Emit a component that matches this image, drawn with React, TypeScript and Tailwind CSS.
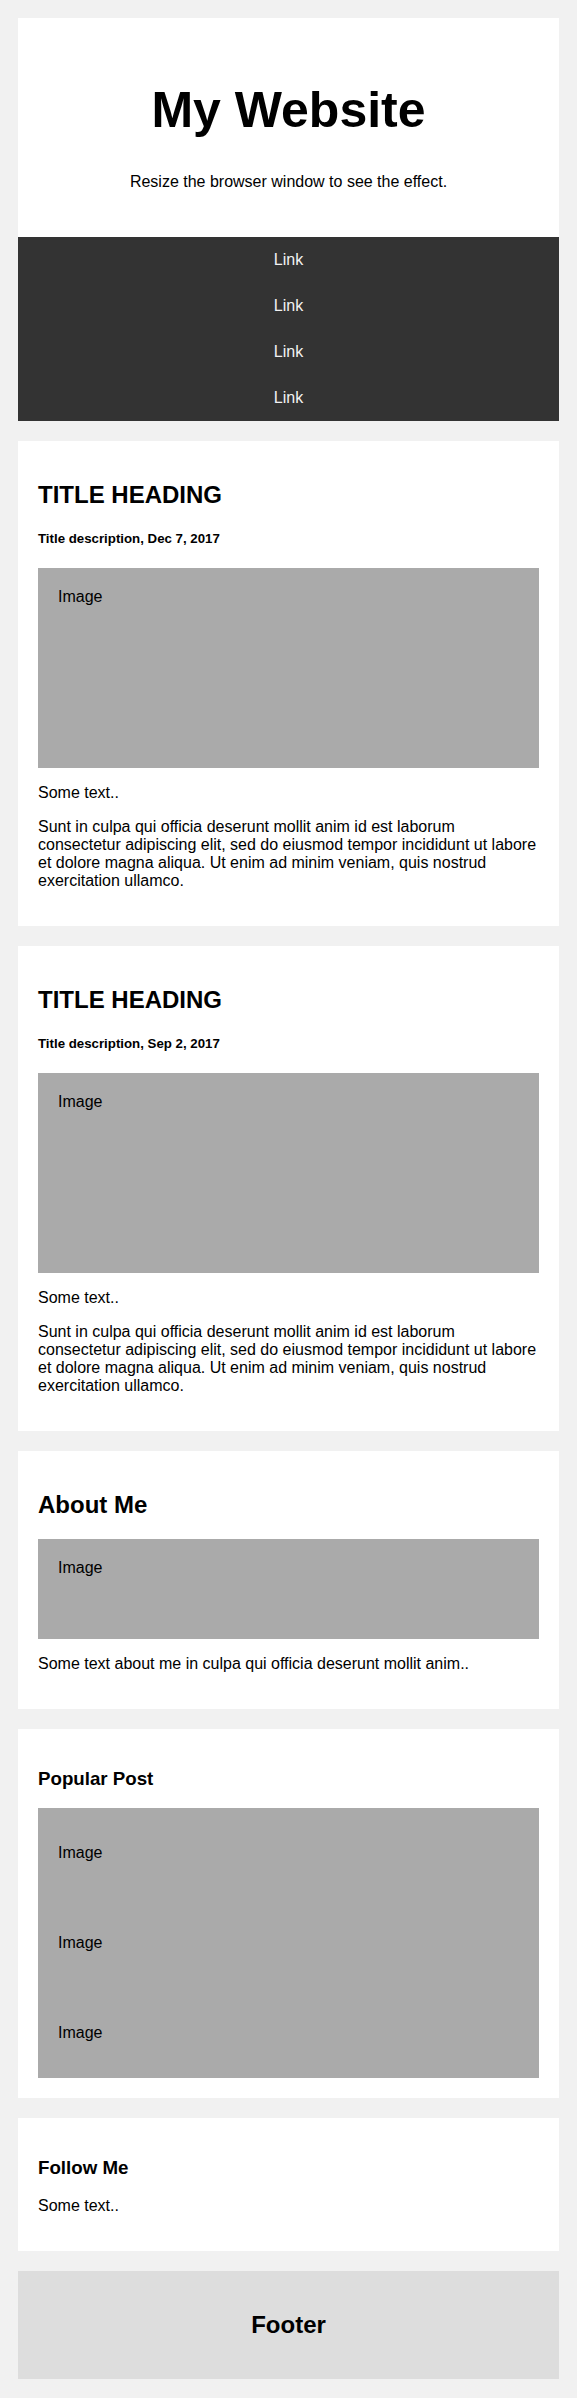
import * as React from "react";

const sunt =
  "Sunt in culpa qui officia deserunt mollit anim id est laborum consectetur adipiscing elit, sed do eiusmod tempor incididunt ut labore et dolore magna aliqua. Ut enim ad minim veniam, quis nostrud exercitation ullamco.";

type PostProps = {
  date: string;
};

function Post({ date }: Readonly<PostProps>): React.JSX.Element {
  return (
    <div className="mt-5 flex flex-col bg-white px-5 pt-5 pb-9">
      <h2 className="mt-5 text-[24px] leading-[28px] font-bold">TITLE HEADING</h2>
      <h5 className="mt-[22px] text-[13.28px] leading-[15px] font-bold">Title description, {date}</h5>
      <div className="mt-[22px] h-[200px] bg-[#aaaaaa] p-5 leading-[18px]">Image</div>
      <p className="mt-4 leading-[18px]">Some text..</p>
      <p className="mt-4 leading-[18px]">{sunt}</p>
    </div>
  );
}

export default function App(): React.JSX.Element {
  const links = ["Link", "Link", "Link", "Link"];

  return (
    <div className="min-h-screen bg-[#f1f1f1] p-[18px] font-['Liberation_Sans',Arial,sans-serif] text-[16px] text-black">
      {/* Header */}
      <div className="flex flex-col items-center bg-white pt-[30px] pb-[46px] text-center">
        <h1 className="mt-[34px] mb-[34px] text-[50px] leading-[57px] font-bold">My Website</h1>
        <p className="leading-[18px]">Resize the browser window to see the effect.</p>
      </div>

      {/* Top nav */}
      <div className="flex flex-col bg-[#333333]">
        {links.map((l, i) => (
          <a key={i} href="#" className="block h-[46px] py-[14px] text-center leading-[18px] text-[#f2f2f2]">
            {l}
          </a>
        ))}
      </div>

      <Post date="Dec 7, 2017" />
      <Post date="Sep 2, 2017" />

      {/* About */}
      <div className="mt-5 flex flex-col bg-white px-5 pt-5 pb-9">
        <h2 className="mt-5 text-[24px] leading-[28px] font-bold">About Me</h2>
        <div className="mt-5 h-[100px] bg-[#aaaaaa] p-5 leading-[18px]">Image</div>
        <p className="mt-4 leading-[18px]">Some text about me in culpa qui officia deserunt mollit anim..</p>
      </div>

      {/* Popular */}
      <div className="mt-5 flex flex-col bg-white p-5">
        <h3 className="mt-[19px] text-[18.72px] leading-[21px] font-bold">Popular Post</h3>
        <div className="mt-[19px] flex flex-col">
          {[0, 1, 2].map((i) => (
            <div key={i} className="bg-[#aaaaaa] p-5">
              <p className="my-4 leading-[18px]">Image</p>
            </div>
          ))}
        </div>
      </div>

      {/* Follow */}
      <div className="mt-5 flex flex-col bg-white px-5 pt-5 pb-9">
        <h3 className="mt-[19px] text-[18.72px] leading-[21px] font-bold">Follow Me</h3>
        <p className="mt-[19px] leading-[18px]">Some text..</p>
      </div>

      {/* Footer */}
      <div className="mt-5 flex flex-col items-center bg-[#dddddd] p-5 text-center">
        <h2 className="my-5 text-[24px] leading-[28px] font-bold">Footer</h2>
      </div>
    </div>
  );
}
